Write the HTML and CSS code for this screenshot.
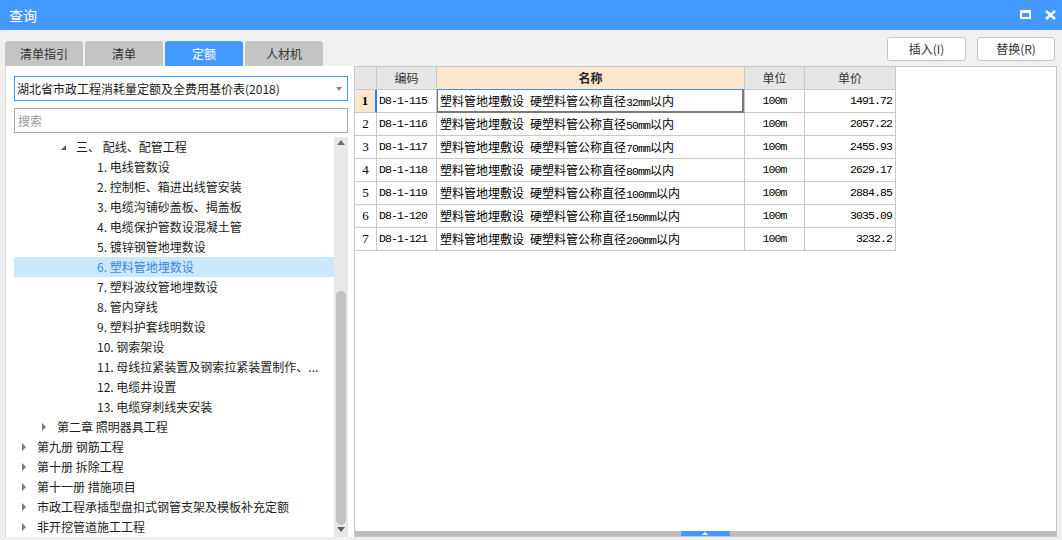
FILE: index.html
```html
<!DOCTYPE html>
<html lang="zh-CN">
<head>
<meta charset="utf-8">
<title>查询</title>
<link rel="stylesheet" href="styles.css">
</head>
<body>
<div class="window">
  <div class="titlebar">
    <span class="title">查询</span>
    <div class="winbtns">
      <svg class="ico-max" width="11" height="9" viewBox="0 0 11 9"><path d="M1 1.5H10V8H1Z" fill="none" stroke="#fff" stroke-width="2"/><path d="M0 1.5H11" stroke="#fff" stroke-width="3"/></svg>
      <svg class="ico-close" width="11" height="10" viewBox="0 0 11 10"><path d="M1 1L10 9M10 1L1 9" stroke="#fff" stroke-width="2.4"/></svg>
    </div>
  </div>
  <div class="toolbar">
    <div class="tabs">
      <div class="tab">清单指引</div>
      <div class="tab">清单</div>
      <div class="tab active">定额</div>
      <div class="tab">人材机</div>
    </div>
    <div class="actions">
      <button class="btn b1">插入(I)</button>
      <button class="btn b2">替换(R)</button>
    </div>
  </div>
  <div class="main">
    <div class="left">
      <div class="select"><span>湖北省市政工程消耗量定额及全费用基价表(2018)</span><i class="caret"></i></div>
      <div class="search">搜索</div>
      <div class="treewrap">
        <div class="tree">
          <div class="row l2"><i class="tg exp"></i><span>三、 配线、配管工程</span></div>
          <div class="row l3"><i class="tg"></i><span>1. 电线管数设</span></div>
          <div class="row l3"><i class="tg"></i><span>2. 控制柜、箱进出线管安装</span></div>
          <div class="row l3"><i class="tg"></i><span>3. 电缆沟铺砂盖板、揭盖板</span></div>
          <div class="row l3"><i class="tg"></i><span>4. 电缆保护管数设混凝土管</span></div>
          <div class="row l3"><i class="tg"></i><span>5. 镀锌钢管地埋数设</span></div>
          <div class="row l3 sel"><i class="tg"></i><span>6. 塑料管地埋数设</span></div>
          <div class="row l3"><i class="tg"></i><span>7. 塑料波纹管地埋数设</span></div>
          <div class="row l3"><i class="tg"></i><span>8. 管内穿线</span></div>
          <div class="row l3"><i class="tg"></i><span>9. 塑料护套线明数设</span></div>
          <div class="row l3"><i class="tg"></i><span>10. 钢索架设</span></div>
          <div class="row l3"><i class="tg"></i><span>11. 母线拉紧装置及钢索拉紧装置制作、...</span></div>
          <div class="row l3"><i class="tg"></i><span>12. 电缆井设置</span></div>
          <div class="row l3"><i class="tg"></i><span>13. 电缆穿刺线夹安装</span></div>
          <div class="row l1"><i class="tg col"></i><span>第二章 照明器具工程</span></div>
          <div class="row l0"><i class="tg col"></i><span>第九册 钢筋工程</span></div>
          <div class="row l0"><i class="tg col"></i><span>第十册 拆除工程</span></div>
          <div class="row l0"><i class="tg col"></i><span>第十一册 措施项目</span></div>
          <div class="row l0"><i class="tg col"></i><span>市政工程承插型盘扣式钢管支架及模板补充定额</span></div>
          <div class="row l0"><i class="tg col"></i><span>非开挖管道施工工程</span></div>
        </div>
        <div class="vscroll">
          <div class="arr up"></div>
          <div class="thumb"></div>
          <div class="arr down"></div>
        </div>
      </div>
    </div>
    <div class="right">
      <div class="grid">
        <div class="c hd"></div>
        <div class="c hd">编码</div>
        <div class="c hd hsel">名称</div>
        <div class="c hd">单位</div>
        <div class="c hd">单价</div>

        <div class="c num cur">1</div>
        <div class="c code">D8-1-115</div>
        <div class="c name focus">塑料管地埋敷设<span class="m"> </span>硬塑料管公称直径<span class="m">32mm</span>以内</div>
        <div class="c unit">100m</div>
        <div class="c price">1491.72</div>

        <div class="c num">2</div>
        <div class="c code">D8-1-116</div>
        <div class="c name">塑料管地埋敷设<span class="m"> </span>硬塑料管公称直径<span class="m">50mm</span>以内</div>
        <div class="c unit">100m</div>
        <div class="c price">2057.22</div>

        <div class="c num">3</div>
        <div class="c code">D8-1-117</div>
        <div class="c name">塑料管地埋敷设<span class="m"> </span>硬塑料管公称直径<span class="m">70mm</span>以内</div>
        <div class="c unit">100m</div>
        <div class="c price">2455.93</div>

        <div class="c num">4</div>
        <div class="c code">D8-1-118</div>
        <div class="c name">塑料管地埋敷设<span class="m"> </span>硬塑料管公称直径<span class="m">80mm</span>以内</div>
        <div class="c unit">100m</div>
        <div class="c price">2629.17</div>

        <div class="c num">5</div>
        <div class="c code">D8-1-119</div>
        <div class="c name">塑料管地埋敷设<span class="m"> </span>硬塑料管公称直径<span class="m">100mm</span>以内</div>
        <div class="c unit">100m</div>
        <div class="c price">2884.85</div>

        <div class="c num">6</div>
        <div class="c code">D8-1-120</div>
        <div class="c name">塑料管地埋敷设<span class="m"> </span>硬塑料管公称直径<span class="m">150mm</span>以内</div>
        <div class="c unit">100m</div>
        <div class="c price">3035.09</div>

        <div class="c num">7</div>
        <div class="c code">D8-1-121</div>
        <div class="c name">塑料管地埋敷设<span class="m"> </span>硬塑料管公称直径<span class="m">200mm</span>以内</div>
        <div class="c unit">100m</div>
        <div class="c price">3232.2</div>
      </div>
      <div class="hbar"><div class="hthumb"><i class="hup"></i></div></div>
    </div>
  </div>
</div>
</body>
</html>
```
FILE: styles.css
```css
* { box-sizing: border-box; }
html, body { margin: 0; padding: 0; }
body {
  width: 1062px;
  height: 540px;
  overflow: hidden;
  background: #f0f0f0;
  font-family: "Noto Sans CJK SC", "Liberation Sans", sans-serif;
  font-size: 12px;
  color: #222;
}
.window { display: flex; flex-direction: column; height: 540px; }

.titlebar {
  height: 30px;
  background: #4499ff;
  display: flex;
  align-items: center;
  padding: 0 6px 0 9px;
}
.title { color: #fff; font-size: 14px; line-height: 30px; }
.winbtns { margin-left: auto; display: flex; align-items: center; gap: 14px; }
.ico-max { display: block; margin-top: -1px; }
.ico-close { display: block; margin-top: -1px; }

.toolbar {
  height: 36px;
  display: flex;
  padding: 0 7px 0 5px;
}
.tabs { display: flex; gap: 2px; align-self: flex-end; }
.tab {
  width: 78px;
  height: 25px;
  line-height: 25px;
  text-align: center;
  background: #c4c4c4;
  color: #333;
  border-radius: 3px 3px 0 0;
}
.tab.active { background: #4499ff; color: #fff; }
.actions { margin-left: auto; padding-top: 7px; display: flex; gap: 11px; }
.btn {
  height: 24px;
  background: #fff;
  border: 1px solid #c6c6c6;
  border-radius: 3px;
  font-family: "Noto Sans CJK SC", "Liberation Sans", sans-serif;
  font-size: 12px;
  color: #333;
  padding: 0;
  line-height: 22px;
}
.b1 { width: 79px; }
.b2 { width: 78px; }

.main {
  display: flex;
  height: 471px;
  padding: 0 5px;
}
.left {
  width: 349px;
  background: #fff;
  border-left: 1px solid #dadada;
  padding: 10px 6px 0 8px;
}
.select {
  width: 334px;
  height: 25px;
  border: 1px solid #4499ff;
  display: flex;
  align-items: center;
  padding-left: 2px;
  line-height: 23px;
  color: #222;
}
.caret {
  margin-left: auto;
  margin-right: 5px;
  width: 0; height: 0;
  border-left: 3.5px solid transparent;
  border-right: 3.5px solid transparent;
  border-top: 4px solid #888;
}
.search {
  margin-top: 7px;
  width: 334px;
  height: 25px;
  border: 1px solid #ababab;
  padding-left: 3px;
  line-height: 23px;
  color: #999;
}
.treewrap { margin-top: 4px; height: 400px; display: flex; }
.tree { width: 320px; overflow: hidden; }
.row {
  height: 20px;
  line-height: 20px;
  display: flex;
  align-items: center;
  white-space: nowrap;
  color: #1e1e1e;
}
.row.l0 { padding-left: 8px; }
.row.l1 { padding-left: 28px; }
.row.l2 { padding-left: 47px; }
.row.l3 { padding-left: 68px; }
.row.sel { background: #cce8ff; color: #3a86dd; }
.tg { width: 15px; height: 20px; flex: none; position: relative; }
.tg.col::before {
  content: "";
  position: absolute;
  left: 0; top: 6px;
  border-top: 4px solid transparent;
  border-bottom: 4px solid transparent;
  border-left: 4px solid #7a7a7a;
}
.tg.exp::before {
  content: "";
  position: absolute;
  left: 0; top: 8px;
  border-left: 5px solid transparent;
  border-bottom: 5px solid #5a5a5a;
}

.vscroll {
  width: 14px;
  background: #e8e8e8;
  display: flex;
  flex-direction: column;
}
.arr { height: 12px; flex: none; position: relative; }
.arr.up::before {
  content: "";
  position: absolute;
  left: 3px; top: 3px;
  border-left: 4px solid transparent;
  border-right: 4px solid transparent;
  border-bottom: 5px solid #707070;
}
.arr.down { margin-top: auto; }
.arr.down::before {
  content: "";
  position: absolute;
  left: 3px; top: 2px;
  border-left: 4px solid transparent;
  border-right: 4px solid transparent;
  border-top: 5px solid #606060;
}
.thumb {
  margin: 142px 0 0 2px;
  width: 10px;
  height: 234px;
  background: #c1c1c1;
  border-radius: 5px;
}

.right {
  flex: 1;
  background: #fff;
  border: 1px solid #c8c8c8;
  display: flex;
  flex-direction: column;
}
.grid {
  display: grid;
  grid-template-columns: 22px 60px 308px 60px 91px;
  grid-auto-rows: 23px;
  width: 541px;
}
.c {
  border-right: 1px solid #c8c8c8;
  border-bottom: 1px solid #c8c8c8;
  line-height: 22px;
  white-space: nowrap;
  overflow: hidden;
  color: #000;
}
.hd { background: #e6e6e6; text-align: center; color: #333; }
.hd.hsel { background: #fde7cc; font-weight: bold; color: #222; border-bottom-color: #3d8eff; }
.num {
  text-align: center;
  font-family: "Liberation Serif", serif;
  font-size: 13px;
}
.num.cur { background: #fde7cc; font-weight: bold; border-right: 2px solid #1f7fff; }
.code, .unit, .price, .m {
  font-family: "Liberation Mono", monospace;
  font-size: 11.5px;
  letter-spacing: -0.9px;
  color: #000;
}
.code { padding-left: 2px; }
.name { padding-left: 3px; }
.unit { text-align: center; }
.price { text-align: right; padding-right: 3px; }
.focus {
  box-shadow: inset 1px 0 #7a7a7a, inset -2px 0 #7a7a7a, inset 0 -1px #7a7a7a;
  border-bottom-color: #7a7a7a;
}

.hbar {
  margin-top: auto;
  height: 5px;
  background: #bcbcbc;
  position: relative;
}
.hthumb {
  position: absolute;
  left: 326px; top: 0;
  width: 49px;
  height: 5px;
  background: #4499ff;
}
.hup {
  position: absolute;
  left: 21px; top: 1px;
  border-left: 3px solid transparent;
  border-right: 3px solid transparent;
  border-bottom: 3px solid #fff;
}
```
